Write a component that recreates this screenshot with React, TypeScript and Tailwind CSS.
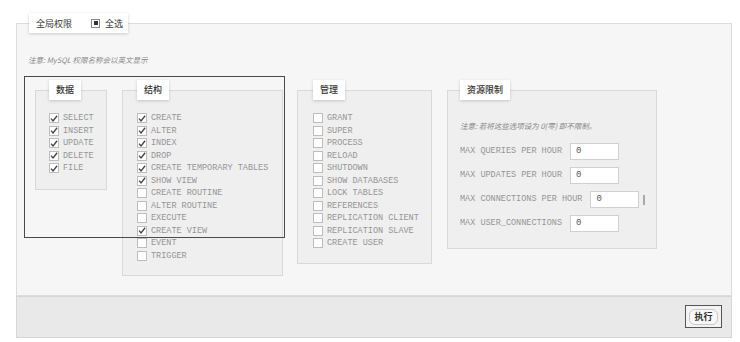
import React from "react";

const mono = { fontFamily: '"Liberation Mono", "Courier New", monospace' } as const;

function Box({ checked }: { checked: boolean }) {
  return (
    <span className="inline-flex w-[10px] h-[10px] border border-[#bdbdbd] bg-white items-center justify-center shrink-0">
      {checked && (
        <svg width="9" height="9" viewBox="0 0 9 9">
          <path d="M1.2 4.6 L3.4 7.2 L8 1.4" fill="none" stroke="#444" strokeWidth="1.5" />
        </svg>
      )}
    </span>
  );
}

function Row({ label, checked }: { label: string; checked: boolean }) {
  return (
    <div className="flex items-center h-[12.5px] gap-[4px]">
      <Box checked={checked} />
      <span className="text-[8.5px] text-[#959595] whitespace-pre leading-none" style={mono}>
        {label}
      </span>
    </div>
  );
}

function Legend({ children }: { children: React.ReactNode }) {
  return (
    <legend className="bg-white h-[20px] px-[7px] shadow-[0_1px_3px_rgba(0,0,0,0.18)] text-[9px] text-[#333] font-medium leading-[20px]">
      {children}
    </legend>
  );
}

export default function App() {
  const data: [string, boolean][] = [
    ["SELECT", true],
    ["INSERT", true],
    ["UPDATE", true],
    ["DELETE", true],
    ["FILE", true],
  ];
  const struct: [string, boolean][] = [
    ["CREATE", true],
    ["ALTER", true],
    ["INDEX", true],
    ["DROP", true],
    ["CREATE TEMPORARY TABLES", true],
    ["SHOW VIEW", true],
    ["CREATE ROUTINE", false],
    ["ALTER ROUTINE", false],
    ["EXECUTE", false],
    ["CREATE VIEW", true],
    ["EVENT", false],
    ["TRIGGER", false],
  ];
  const admin: string[] = [
    "GRANT",
    "SUPER",
    "PROCESS",
    "RELOAD",
    "SHUTDOWN",
    "SHOW DATABASES",
    "LOCK TABLES",
    "REFERENCES",
    "REPLICATION CLIENT",
    "REPLICATION SLAVE",
    "CREATE USER",
  ];
  const limits: [string, boolean][] = [
    ["MAX QUERIES PER HOUR", false],
    ["MAX UPDATES PER HOUR", false],
    ["MAX CONNECTIONS PER HOUR", true],
    ["MAX USER_CONNECTIONS", false],
  ];

  return (
    <div
      className="relative w-[740px] h-[342px] bg-white overflow-hidden"
      style={{ fontFamily: '"Noto Sans CJK SC", "Liberation Sans", sans-serif' }}
    >
      <div className="pt-[13px] pl-[16px]">
        <fieldset className="w-[716px] border border-[#dcdcdc] bg-[#f6f6f6] pb-[19px]">
          <legend className="ml-[12px] bg-white h-[20px] pl-[7px] pr-[5px] shadow-[0_1px_3px_rgba(0,0,0,0.18)] flex items-center text-[9px] text-[#333] leading-none">
            <span>全局权限</span>
            <span className="ml-[19px] inline-flex w-[9px] h-[9px] border border-[#888] bg-white items-center justify-center">
              <span className="w-[4px] h-[4px] bg-[#333]" />
            </span>
            <span className="ml-[5px]">全选</span>
          </legend>

          <div className="pl-[11px] mt-[22px] h-[10px] text-[7.5px] italic text-[#888] leading-[10px]">
            注意: MySQL 权限名称会以英文显示
          </div>

          <div className="flex items-start mt-[15px] pl-[18px]">
            <fieldset className="w-[72px] border border-[#d9d9d9] bg-[#efefef] pl-[13px] pt-[12px] pb-[14px]">
              <Legend>数据</Legend>
              {data.map(([l, c]) => (
                <Row key={l} label={l} checked={c} />
              ))}
            </fieldset>

            <fieldset className="ml-[15px] w-[161px] border border-[#d9d9d9] bg-[#efefef] pl-[14px] pt-[12px] pb-[13px]">
              <Legend>结构</Legend>
              {struct.map(([l, c]) => (
                <Row key={l} label={l} checked={c} />
              ))}
            </fieldset>

            <fieldset className="ml-[14px] w-[135px] border border-[#d9d9d9] bg-[#efefef] pl-[15px] pt-[12px] pb-[13px]">
              <Legend>管理</Legend>
              {admin.map((l) => (
                <Row key={l} label={l} checked={false} />
              ))}
            </fieldset>

            <fieldset className="ml-[15px] w-[210px] border border-[#d9d9d9] bg-[#efefef] pl-[12px] pt-[21px] pb-[16px]">
              <Legend>资源限制</Legend>
              <div className="h-[10px] text-[7.5px] italic text-[#888] leading-[10px]">
                注意: 若将这些选项设为 0(零) 即不限制。
              </div>
              <div className="mt-[12px] flex flex-col gap-[7px]">
                {limits.map(([l, bar]) => (
                  <div key={l} className="flex items-center h-[17px]">
                    <span className="text-[8.5px] text-[#959595] whitespace-pre leading-none" style={mono}>
                      {l}
                    </span>
                    <span
                      className="ml-[8px] w-[49px] h-[17px] bg-white border border-[#d0d0d0] flex items-center pl-[5px] text-[9px] text-[#555]"
                      style={mono}
                    >
                      0
                    </span>
                    {bar && <span className="ml-[4px] w-[2px] h-[10px] bg-[#aaa]" />}
                  </div>
                ))}
              </div>
            </fieldset>
          </div>
        </fieldset>

        <div className="w-[716px] h-[42px] border border-[#d6d6d6] bg-[#e9e9e9] flex items-start justify-end pt-[8px] pr-[9px]">
          <div className="w-[37px] h-[23px] border-[1.5px] border-[#555] bg-[#f3f3f3] flex items-center justify-center">
            <span className="px-[4px] h-[16px] rounded-[6px] border border-[#c8c8c8] bg-[#f8f8f8] text-[9px] font-bold text-[#333] flex items-center">
              执行
            </span>
          </div>
        </div>
      </div>

      <div className="absolute left-[24px] top-[76px] w-[261px] h-[162px] border-[1.5px] border-[#4a4a4a] pointer-events-none" />
    </div>
  );
}
